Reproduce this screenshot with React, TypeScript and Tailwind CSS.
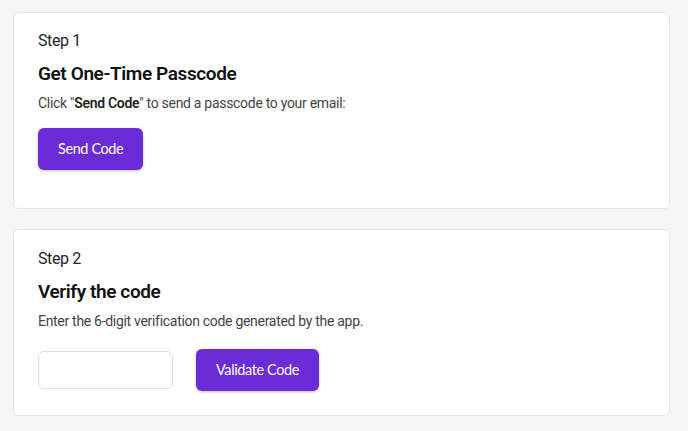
import { useState } from "react";

// Two-step passcode flow
export default function App() {
  const [code, setCode] = useState("");

  return (
    <div className="min-h-screen w-full bg-[#f6f6f6] pt-3 pl-[13px] pr-[18px] font-['Roboto',sans-serif]">
      {/* Step 1 */}
      <div className="rounded-md border border-[#e6e6e6] bg-white px-6 pt-4 pb-[38px]">
        <div className="text-[16px] leading-6 tracking-[-0.4px] text-[#212529]">Step 1</div>
        <h2 className="mt-[7px] text-[19px] leading-7 font-semibold tracking-[-0.4px] text-[#111]">
          Get One-Time Passcode
        </h2>
        <p className="mt-1 text-[14px] leading-[22px] tracking-[-0.3px] text-[#444]">
          Click "<b className="font-semibold text-[#222]">Send Code</b>" to send a passcode to your email:
        </p>
        <button
          type="button"
          className="mt-[14px] h-[42px] rounded-md bg-[#6b2bd6] px-[20px] font-['Lato',sans-serif] text-[14.5px] tracking-[-0.4px] text-white shadow-[0_1px_3px_rgba(0,0,0,0.25)]"
        >
          Send Code
        </button>
      </div>

      {/* Step 2 */}
      <div className="mt-5 rounded-md border border-[#e6e6e6] bg-white px-6 pt-[17px] pb-[24px]">
        <div className="text-[16px] leading-6 tracking-[-0.4px] text-[#212529]">Step 2</div>
        <h2 className="mt-[7px] text-[19px] leading-7 font-semibold tracking-[-0.4px] text-[#111]">
          Verify the code
        </h2>
        <p className="mt-1 text-[14px] leading-[22px] tracking-[-0.3px] text-[#444]">
          Enter the 6-digit verification code generated by the app.
        </p>
        <div className="mt-[17px] flex items-center gap-[23px]">
          <input
            value={code}
            onChange={(e) => setCode(e.target.value)}
            className="h-[38px] w-[135px] rounded-md border border-[#dedede] bg-white px-3 text-[14px] outline-none"
          />
          <button
            type="button"
            className="h-[42px] rounded-md bg-[#6b2bd6] px-[20px] font-['Lato',sans-serif] text-[14.5px] tracking-[-0.4px] text-white shadow-[0_1px_3px_rgba(0,0,0,0.25)]"
          >
            Validate Code
          </button>
        </div>
      </div>
    </div>
  );
}
